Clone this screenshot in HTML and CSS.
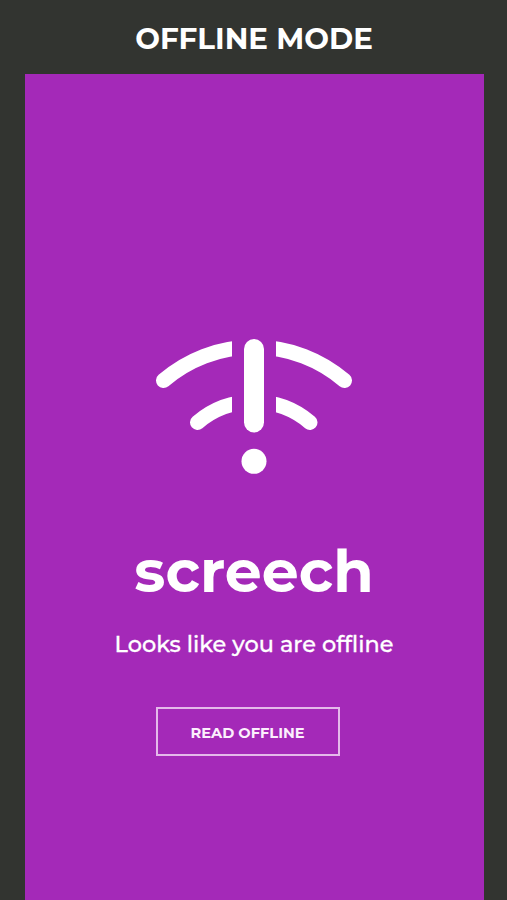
FILE: index.html
```html
<!DOCTYPE html>
<html lang="en">
<head>
    <meta charset="UTF-8">
    <meta name="viewport" content="width=device-width, initial-scale=1.0">
    <title>Offline Mode</title>
    <link rel="stylesheet" href="styles.css">
</head>
<body>
    <h1 class="heading">OFFLINE MODE</h1>
    <main class="screen">
        <svg class="offline-icon" width="198" height="138" viewBox="155 337 198 138">
            <g class="waves">
                <path d="M163.5 380.5A139 139 0 0 1 344.5 380.5"/>
                <path d="M197.5 422.5A87 87 0 0 1 310 422.5"/>
            </g>
            <rect class="gap" x="232" y="335" width="44" height="105"/>
            <rect x="244" y="339" width="20" height="93.5" rx="10"/>
            <circle cx="254" cy="461.3" r="12.5"/>
        </svg>
        <h2 class="brand">screech</h2>
        <p class="message">Looks like you are offline</p>
        <button class="read-button">READ OFFLINE</button>
    </main>
</body>
</html>
```
FILE: styles.css
```css
body {
    margin: 0;
    height: 900px;
    overflow: hidden;
    background-color: #323430;
    color: #fff;
    font-family: Montserrat, Inter, sans-serif;
    text-align: center;
}

.heading {
    height: 74px;
    margin: 0;
    padding-left: 1px;
    font-size: 29.3px;
    font-weight: 700;
    line-height: 77px;
}

.screen {
    display: flex;
    flex-direction: column;
    align-items: center;
    box-sizing: border-box;
    height: 826px;
    margin: 0 23px 0 25px;
    padding: 263px 1px 0 0;
    background-color: #a429b8;
}

.offline-icon {
    display: block;
    fill: #fff;
}

.waves {
    fill: none;
    stroke: #fff;
    stroke-width: 15;
    stroke-linecap: round;
}

.gap {
    fill: #a429b8;
}

.brand {
    margin: 61px 0 0;
    font-size: 58.6px;
    font-weight: 700;
    line-height: 71px;
}

.message {
    margin: 22px 0 0;
    font-size: 22.4px;
    font-weight: 500;
    line-height: 31px;
    -webkit-text-stroke: 0.3px #fff;
}

.read-button {
    width: 184px;
    height: 49px;
    margin: 47px 12px 0 0;
    padding: 2px 1px 0 0;
    border: 2px solid #e4b9ea;
    background: none;
    color: #fceffd;
    font-family: inherit;
    font-size: 14.6px;
    font-weight: 700;
}
```
